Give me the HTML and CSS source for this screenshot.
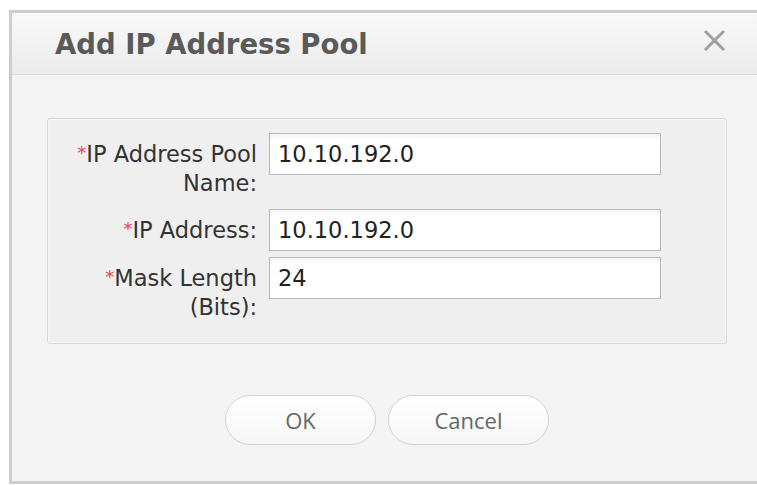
FILE: index.html
```html
<!DOCTYPE html>
<html lang="en">
<head>
<meta charset="utf-8">
<title>Add IP Address Pool</title>
<link rel="stylesheet" href="styles.css">
</head>
<body>
  <div class="dialog">
    <div class="dialog-header">
      <h1 class="dialog-title">Add IP Address Pool</h1>
      <button class="close-btn" type="button" aria-label="Close">
        <svg width="23" height="23" viewBox="0 0 23 23">
          <path d="M2 2 L21 21 M21 2 L2 21" stroke="#a0a0a0" stroke-width="3" stroke-linecap="butt"/>
        </svg>
      </button>
    </div>
    <div class="dialog-body">
      <div class="form-panel">
        <div class="form-row">
          <label class="field-label" for="pool-name"><span class="req">*</span>IP Address Pool Name:</label>
          <input class="field-input" id="pool-name" type="text" value="10.10.192.0">
        </div>
        <div class="form-row">
          <label class="field-label" for="ip-addr"><span class="req">*</span>IP Address:</label>
          <input class="field-input" id="ip-addr" type="text" value="10.10.192.0">
        </div>
        <div class="form-row">
          <label class="field-label" for="mask-len"><span class="req">*</span>Mask Length (Bits):</label>
          <input class="field-input" id="mask-len" type="text" value="24">
        </div>
      </div>
      <div class="actions">
        <button class="pill-btn btn-ok" type="button">OK</button>
        <button class="pill-btn btn-cancel" type="button">Cancel</button>
      </div>
    </div>
  </div>
</body>
</html>
```

FILE: styles.css
```css
html, body {
  margin: 0;
  padding: 0;
  background: #ffffff;
  overflow: hidden;
}

.dialog {
  margin: 10px 0 0 9px;
  width: 748px;
  height: 474px;
  box-sizing: border-box;
  border: 3px solid #cdcdcd;
  border-right: none;
  background: #f4f4f4;
  display: flex;
  flex-direction: column;
}

.dialog-header {
  height: 61px;
  flex: none;
  border-bottom: 1px solid #dcdcdc;
  background: linear-gradient(#f9f9f9, #ececec);
  display: flex;
  align-items: center;
  padding: 0 0 0 43px;
  position: relative;
}

.dialog-title {
  margin: 0;
  font-family: "DejaVu Sans", Verdana, sans-serif;
  font-weight: 700;
  font-size: 27.5px;
  color: #5a5a5a;
}

.close-btn {
  position: absolute;
  left: 691px;
  top: 16px;
  width: 23px;
  height: 23px;
  padding: 0;
  border: none;
  background: none;
  display: flex;
}

.dialog-body {
  flex: 1;
  display: flex;
  flex-direction: column;
  padding: 43px 0 0 35px;
}

.form-panel {
  width: 680px;
  box-sizing: border-box;
  border: 1px solid #d9d9d9;
  border-radius: 3px;
  background: #efefef;
  box-shadow: inset 0 0 0 1px #f7f7f7;
  padding: 14px 0 16px 0;
  display: flex;
  flex-direction: column;
  gap: 6px;
}

.form-row {
  display: grid;
  grid-template-columns: 209px 392px;
  column-gap: 12px;
  align-items: start;
}

.field-label {
  font-family: "DejaVu Sans", Verdana, sans-serif;
  font-size: 22.5px;
  line-height: 29px;
  color: #333333;
  text-align: right;
  padding: 5px 0;
}

.req {
  color: #e8434e;
  font-size: 18px;
  vertical-align: 3px;
}

.field-input {
  box-sizing: border-box;
  width: 392px;
  height: 42px;
  margin: 0;
  border: 1px solid #b9b9b9;
  border-radius: 0;
  background: #ffffff;
  box-shadow: inset 0 3px 4px rgba(0, 0, 0, 0.05);
  padding: 0 8px;
  font-family: "DejaVu Sans", Verdana, sans-serif;
  font-size: 22.5px;
  color: #222222;
  outline: none;
}

.actions {
  width: 680px;
  display: flex;
  justify-content: center;
  gap: 12px;
  margin-top: 51px;
}

.pill-btn {
  height: 50px;
  border: 1px solid #d2d2d2;
  border-radius: 25px;
  background: linear-gradient(#ffffff, #f6f6f6);
  font-family: "Open Sans", sans-serif;
  font-size: 22px;
  color: #666666;
  padding: 0;
}

.btn-ok { width: 151px; }
.btn-cancel { width: 161px; }
```
